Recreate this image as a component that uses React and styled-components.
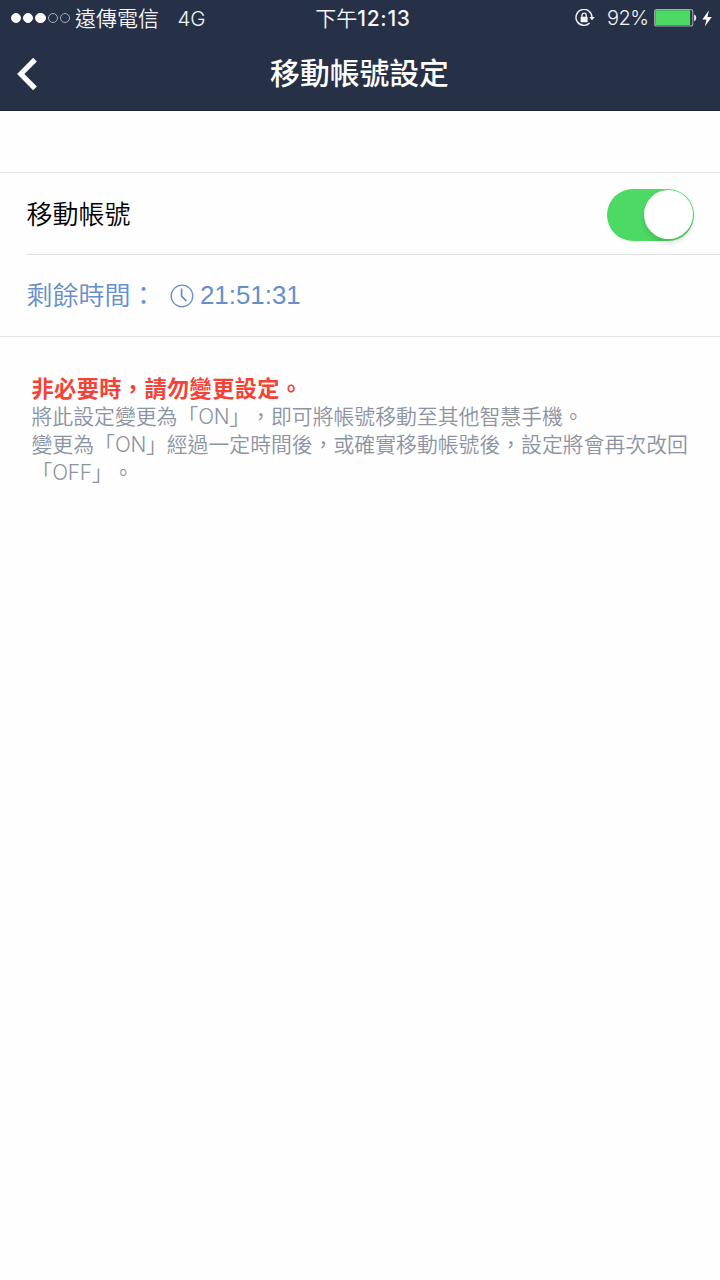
import React from "react";
import styled, { createGlobalStyle } from "styled-components";

const GlobalStyle = createGlobalStyle`
  * { box-sizing: border-box; }
  body {
    margin: 0;
    background: #fefefe;
    font-family: Inter, "Noto Sans CJK TC", sans-serif;
    text-spacing-trim: space-all;
  }
`;

const Screen = styled.main`
  width: 720px;
  height: 1280px;
  overflow: hidden;
  background: #fefefe;
`;

const Header = styled.header`
  height: 111px;
  background: #263148;
  color: #fff;
  border-bottom: 1px solid #1d263b;
`;

const StatusBar = styled.div`
  display: grid;
  grid-template-columns: 1fr auto 1fr;
  align-items: center;
  height: 36px;
  padding: 0 8px 0 11px;
  font-size: 21px;
  white-space: nowrap;
`;

const StatusGroup = styled.div`
  display: flex;
  align-items: center;
  justify-content: ${({ $end }) => ($end ? "flex-end" : "flex-start")};
`;

const SignalDots = styled.div`
  display: flex;
  gap: 2px;
  margin-right: 5px;
`;

const Dot = styled.i`
  width: 10.2px;
  height: 10.2px;
  border-radius: 50%;
  border: 1px solid ${({ $on }) => ($on ? "#fff" : "#a5abb7")};
  background: ${({ $on }) => ($on ? "#fff" : "transparent")};
`;

const StatusText = styled.span`
  padding-top: 1px;
  font-size: ${({ $size = 21 }) => $size}px;
  line-height: 35px;
  font-weight: ${({ $weight = 350 }) => $weight};
  letter-spacing: ${({ $track = 0 }) => $track}px;
  margin-left: ${({ $left = 0 }) => $left}px;
  color: #f4f5f7;
`;

const Digits = styled.span`
  font-size: 21px;
  font-weight: 550;
  letter-spacing: 0.7px;
`;

const NavBar = styled.div`
  display: grid;
  grid-template-columns: 60px 1fr 60px;
  align-items: center;
  height: 74px;
`;

const BackButton = styled.button`
  display: flex;
  padding: 0 0 0 16px;
  border: 0;
  background: none;
`;

const Title = styled.h1`
  margin: 0;
  padding-right: 1px;
  text-align: center;
  font-size: 29.8px;
  line-height: 75px;
  font-weight: 500;
`;

const Settings = styled.section`
  margin-top: 61px;
  border-top: 1px solid #e4e4e5;
  border-bottom: 1px solid #e4e4e5;
`;

const Row = styled.div`
  display: flex;
  align-items: center;
  height: 81px;
  margin-left: 27px;
  padding: 2px 26px 0 0;
  font-size: 26px;
  white-space: nowrap;
  color: ${({ $accent }) => ($accent ? "#668fcb" : "#000")};
  & + & {
    height: 82px;
    padding-top: 0;
    border-top: 1px solid #e0e0e1;
  }
`;

const RowLabel = styled.span`
  margin-left: -0.6px;
  line-height: 40px;
  font-weight: 350;
`;

const Time = styled.span`
  margin-left: 6px;
  padding-bottom: 2px;
  font-family: "Liberation Sans", sans-serif;
  font-size: 25.9px;
  line-height: 38px;
`;

const Toggle = styled.button`
  display: flex;
  justify-content: flex-end;
  width: 87px;
  height: 52px;
  margin-left: auto;
  padding: 1.5px;
  border: 0;
  border-radius: 26px;
  background: #4cd964;
`;

const Knob = styled.span`
  width: 49px;
  height: 49px;
  border-radius: 50%;
  background: #fff;
  box-shadow: 0 4px 5px rgba(0, 0, 0, 0.12);
`;

const Notice = styled.section`
  padding: 38px 0 0 31.5px;
  color: #8c93a2;
`;

const Warning = styled.p`
  margin: 0;
  color: #f44336;
  font-size: 22.2px;
  letter-spacing: 0.4px;
  font-weight: 700;
  line-height: 28px;
  white-space: nowrap;
`;

const Line = styled.p`
  margin: 0;
  font-size: 20.85px;
  font-weight: 350;
  line-height: 28px;
  white-space: nowrap;
`;

const Latin = styled.span`
  letter-spacing: -0.3px;
`;

const ClockIcon = () => (
  <svg width="24" height="24" viewBox="0 0 24 24" fill="none" stroke="#668fcb" strokeWidth="1.3">
    <circle cx="12" cy="12" r="10.8" />
    <path d="M11.6 4.6v7.6l4.8 4.9" strokeWidth="1.7" />
  </svg>
);

const BackIcon = () => (
  <svg width="22" height="34" viewBox="0 0 22 34" fill="none" stroke="#fff" strokeWidth="5.2">
    <path d="M19 2.6 4.8 17 19 31.4" />
  </svg>
);

const RotationLockIcon = () => (
  <svg width="20" height="18" viewBox="0 0 20 18" fill="none" stroke="#f4f5f7">
    <path d="M14.6 14.1A8 8 0 1 1 17 8.2" strokeWidth="1.4" />
    <path d="M14.2 8h5.6L17 11.2z" fill="#f4f5f7" stroke="none" />
    <rect x="5.6" y="7.8" width="7" height="5.4" rx=".6" fill="#f4f5f7" stroke="none" />
    <path d="M7 8V6.3a2.1 2.1 0 0 1 4.2 0V8" strokeWidth="1.3" />
  </svg>
);

const BatteryIcon = () => (
  <svg width="43" height="18" viewBox="0 0 43 18">
    <rect x=".6" y=".6" width="38.2" height="16.4" rx="2" fill="none" stroke="#a2a6ad" strokeWidth="1.1" />
    <rect x="1.3" y="1.3" width="34.9" height="15" rx=".8" fill="#4cd964" />
    <path d="M40.2 5.5c2.7 1.1 2.7 5.6 0 6.7z" fill="#f4f5f7" />
  </svg>
);

const BoltIcon = () => (
  <svg width="10" height="17" viewBox="0 0 10 17">
    <path d="M7 .3.3 9.4h4.2L2.8 16.6 9.8 6.9H5.4z" fill="#fff" />
  </svg>
);

const Icon = styled.span`
  display: flex;
  flex: none;
  margin-left: ${({ $left = 0 }) => $left}px;
`;

export default function App() {
  return (
    <Screen>
      <GlobalStyle />
      <Header>
        <StatusBar>
          <StatusGroup>
            <SignalDots>
              {[true, true, true, false, false].map((on, i) => (
                <Dot key={i} $on={on} />
              ))}
            </SignalDots>
            <StatusText>遠傳電信</StatusText>
            <StatusText $left={18.5} $size={20.5}>4G</StatusText>
          </StatusGroup>
          <StatusText $left={3}>下午<Digits>12:13</Digits></StatusText>
          <StatusGroup $end>
            <Icon><RotationLockIcon /></Icon>
            <StatusText $left={11.5} $size={20} $track={-0.5}>92%</StatusText>
            <Icon $left={5.5}><BatteryIcon /></Icon>
            <Icon $left={5}><BoltIcon /></Icon>
          </StatusGroup>
        </StatusBar>
        <NavBar>
          <BackButton aria-label="返回"><BackIcon /></BackButton>
          <Title>移動帳號設定</Title>
        </NavBar>
      </Header>
      <Settings>
        <Row>
          <RowLabel>移動帳號</RowLabel>
          <Toggle role="switch" aria-checked="true" aria-label="移動帳號"><Knob /></Toggle>
        </Row>
        <Row $accent>
          <RowLabel>剩餘時間：</RowLabel>
          <Icon $left={13.5}><ClockIcon /></Icon>
          <Time>21:51:31</Time>
        </Row>
      </Settings>
      <Notice>
        <Warning>非必要時，請勿變更設定。</Warning>
        <Line>將此設定變更為「<Latin>ON</Latin>」，即可將帳號移動至其他智慧手機。</Line>
        <Line>變更為「<Latin>ON</Latin>」經過一定時間後，或確實移動帳號後，設定將會再次改回</Line>
        <Line>「<Latin>OFF</Latin>」。</Line>
      </Notice>
    </Screen>
  );
}
